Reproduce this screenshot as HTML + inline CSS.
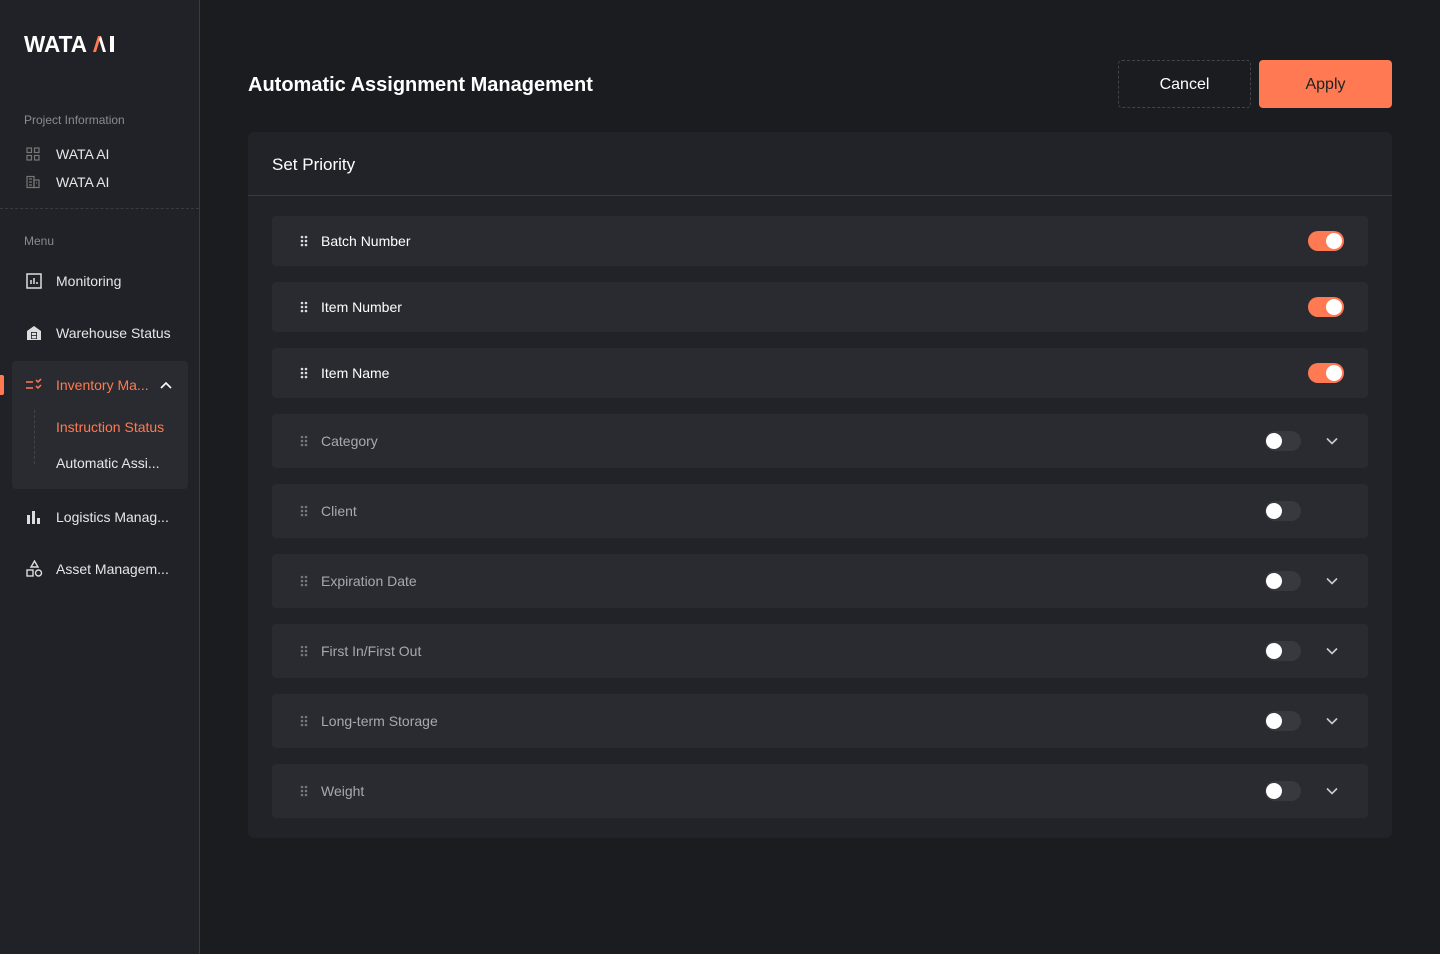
<!DOCTYPE html>
<html><head><meta charset="utf-8"><style>
*{box-sizing:border-box;margin:0;padding:0}
body{width:1440px;height:954px;background:#1b1c20;font-family:"Liberation Sans",sans-serif;position:relative;overflow:hidden;color:#fff}
.sb{position:absolute;left:0;top:0;width:200px;height:954px;background:#212227;border-right:1px solid #3a3b40}
.abs{position:absolute}
.logo{left:24px;top:32px;font-size:22px;font-weight:bold;letter-spacing:-1px;color:#fff;white-space:nowrap}
.lbl{font-size:12px;color:#8a8b90;left:24px}
.it{left:56px;font-size:14px;color:#e6e6e8}
.ic{left:26px}
.card{left:248px;top:132px;width:1144px;height:706px;background:#222328;border-radius:6px}
.row{position:absolute;left:272px;width:1096px;background:#2a2b30;border-radius:4px}
.row .t{position:absolute;left:49px;font-size:14px}
.row .d{position:absolute;left:28px}
.tg{position:absolute;width:36px;height:20px;border-radius:10px}
.on{left:1036px;background:#ff7a52}
.on:after{content:"";position:absolute;right:2px;top:2px;width:16px;height:16px;border-radius:50%;background:#fff}
.off{left:993px;background:#38393e}
.off:after{content:"";position:absolute;left:1px;top:2px;width:16px;height:16px;border-radius:50%;background:#fff}
.ch{position:absolute;left:1054px}
</style></head><body>
<div class="sb">
<svg class="abs" style="left:24px;top:35px" width="92" height="18" viewBox="0 0 92 18"><text x="0" y="17" font-family="Liberation Sans" font-weight="bold" font-size="23" fill="#fff" textLength="63" lengthAdjust="spacingAndGlyphs">WATA</text><path d="M69 17L74 1h3l-5 16z" fill="#ff7a52"/><path d="M77 1l5 16h-3l-4-13z" fill="#fff"/><rect x="86" y="1" width="4" height="16" fill="#fff"/></svg>
<div class="abs lbl" style="top:113px">Project Information</div>
<svg class="abs ic" style="top:147px" width="14" height="14" viewBox="0 0 14 14" fill="none" stroke="#777" stroke-width="1.2"><rect x="1" y="1" width="4.5" height="4.5"/><rect x="8.5" y="1" width="4.5" height="4.5"/><rect x="1" y="8.5" width="4.5" height="4.5"/><rect x="8.5" y="8.5" width="4.5" height="4.5"/></svg>
<div class="abs it" style="top:146px">WATA AI</div>
<svg class="abs ic" style="top:175px" width="14" height="14" viewBox="0 0 14 14" fill="none" stroke="#777" stroke-width="1.2"><rect x="1" y="1.5" width="7" height="11"/><rect x="8" y="5" width="5" height="7.5"/><path d="M3 4h3M3 7h3M3 10h3M10 8h1"/></svg>
<div class="abs it" style="top:174px">WATA AI</div>
<div class="abs" style="left:0;top:208px;width:199px;border-top:1px dashed #3a3b40"></div>
<div class="abs lbl" style="top:234px">Menu</div>
<svg class="abs ic" style="top:273px" width="16" height="16" viewBox="0 0 16 16" fill="none" stroke="#ddd" stroke-width="1.5"><rect x="1" y="1" width="14" height="14"/><path d="M5 11V7M8 11V5M11 11V9"/></svg>
<div class="abs it" style="top:273px">Monitoring</div>
<svg class="abs ic" style="top:325px" width="16" height="16" viewBox="0 0 16 16"><path d="M1 6L8 1l7 5v9H1z" fill="#ddd"/><rect x="5" y="7" width="6" height="7" fill="#212227"/><rect x="5.8" y="7.8" width="4.4" height="2.4" fill="#ddd"/><rect x="5.8" y="11" width="4.4" height="2.4" fill="#ddd"/></svg>
<div class="abs it" style="top:325px">Warehouse Status</div>
<div class="abs" style="left:0;top:375px;width:4px;height:20px;background:#ff7a52;border-radius:0 2px 2px 0"></div>
<div class="abs" style="left:12px;top:361px;width:176px;height:128px;background:#2a2b30;border-radius:4px"></div>
<svg class="abs ic" style="top:378px" width="18" height="14" viewBox="0 0 18 14" fill="none" stroke="#ff7a52" stroke-width="1.5"><path d="M0 4h7M0 10h7M10 2l2 2 3-3M10 8l2 2 3-3"/></svg>
<div class="abs it" style="top:377px;color:#ff7a52">Inventory Ma...</div>
<svg class="abs" style="left:159px;top:380px" width="14" height="10" viewBox="0 0 14 10" fill="none" stroke="#fff" stroke-width="1.6"><path d="M2 8l5-5 5 5"/></svg>
<div class="abs" style="left:34px;top:410px;height:54px;border-left:1px dashed #444"></div>
<div class="abs it" style="top:419px;color:#ff7a52">Instruction Status</div>
<div class="abs it" style="top:455px">Automatic Assi...</div>
<svg class="abs ic" style="top:509px" width="16" height="16" viewBox="0 0 16 16" fill="#ddd"><rect x="1" y="6" width="3" height="9"/><rect x="6" y="2" width="3" height="13"/><rect x="11" y="9" width="3" height="6"/></svg>
<div class="abs it" style="top:509px">Logistics Manag...</div>
<svg class="abs ic" style="top:560px" width="17" height="17" viewBox="0 0 17 17" fill="none" stroke="#ddd" stroke-width="1.4"><path d="M8.5 1l3.5 6H5z"/><rect x="1" y="10" width="6" height="6"/><circle cx="12.5" cy="13" r="3"/></svg>
<div class="abs it" style="top:561px">Asset Managem...</div>
</div>

<div class="abs" style="left:248px;top:74px;font-size:20px;font-weight:bold">Automatic Assignment Management</div>
<div class="abs" style="left:1118px;top:60px;width:133px;height:48px;border:1px dashed #444;border-radius:4px;font-size:16px;text-align:center;line-height:48px">Cancel</div>
<div class="abs" style="left:1259px;top:60px;width:133px;height:48px;background:#ff7a52;border-radius:4px;font-size:16px;text-align:center;line-height:50px;color:#222">Apply</div>

<div class="abs card">
<div style="position:absolute;left:24px;top:23px;font-size:17px">Set Priority</div>
<div style="position:absolute;left:0;top:63px;width:1144px;border-top:1px solid #3a3b40"></div>
</div>

<div class="row" style="top:216px;height:50px"><svg class="d" style="top:19px" width="8" height="12"><g fill="#ddd"><circle cx="2" cy="2" r="1.3"/><circle cx="6" cy="2" r="1.3"/><circle cx="2" cy="6" r="1.3"/><circle cx="6" cy="6" r="1.3"/><circle cx="2" cy="10" r="1.3"/><circle cx="6" cy="10" r="1.3"/></g></svg><div class="t" style="top:17px">Batch Number</div><div class="tg on" style="top:15px"></div></div>
<div class="row" style="top:282px;height:50px"><svg class="d" style="top:19px" width="8" height="12"><g fill="#ddd"><circle cx="2" cy="2" r="1.3"/><circle cx="6" cy="2" r="1.3"/><circle cx="2" cy="6" r="1.3"/><circle cx="6" cy="6" r="1.3"/><circle cx="2" cy="10" r="1.3"/><circle cx="6" cy="10" r="1.3"/></g></svg><div class="t" style="top:17px">Item Number</div><div class="tg on" style="top:15px"></div></div>
<div class="row" style="top:348px;height:50px"><svg class="d" style="top:19px" width="8" height="12"><g fill="#ddd"><circle cx="2" cy="2" r="1.3"/><circle cx="6" cy="2" r="1.3"/><circle cx="2" cy="6" r="1.3"/><circle cx="6" cy="6" r="1.3"/><circle cx="2" cy="10" r="1.3"/><circle cx="6" cy="10" r="1.3"/></g></svg><div class="t" style="top:17px">Item Name</div><div class="tg on" style="top:15px"></div></div>

<div class="row" style="top:414px;height:54px"><svg class="d" style="top:21px" width="8" height="12"><g fill="#777"><circle cx="2" cy="2" r="1.3"/><circle cx="6" cy="2" r="1.3"/><circle cx="2" cy="6" r="1.3"/><circle cx="6" cy="6" r="1.3"/><circle cx="2" cy="10" r="1.3"/><circle cx="6" cy="10" r="1.3"/></g></svg><div class="t" style="top:19px;color:#a8a9ad">Category</div><div class="tg off" style="top:17px"></div><svg class="ch" style="top:23px" width="12" height="8" fill="none" stroke="#ccc" stroke-width="1.6"><path d="M1 1.5l5 5 5-5"/></svg></div>
<div class="row" style="top:484px;height:54px"><svg class="d" style="top:21px" width="8" height="12"><g fill="#777"><circle cx="2" cy="2" r="1.3"/><circle cx="6" cy="2" r="1.3"/><circle cx="2" cy="6" r="1.3"/><circle cx="6" cy="6" r="1.3"/><circle cx="2" cy="10" r="1.3"/><circle cx="6" cy="10" r="1.3"/></g></svg><div class="t" style="top:19px;color:#a8a9ad">Client</div><div class="tg off" style="top:17px"></div></div>
<div class="row" style="top:554px;height:54px"><svg class="d" style="top:21px" width="8" height="12"><g fill="#777"><circle cx="2" cy="2" r="1.3"/><circle cx="6" cy="2" r="1.3"/><circle cx="2" cy="6" r="1.3"/><circle cx="6" cy="6" r="1.3"/><circle cx="2" cy="10" r="1.3"/><circle cx="6" cy="10" r="1.3"/></g></svg><div class="t" style="top:19px;color:#a8a9ad">Expiration Date</div><div class="tg off" style="top:17px"></div><svg class="ch" style="top:23px" width="12" height="8" fill="none" stroke="#ccc" stroke-width="1.6"><path d="M1 1.5l5 5 5-5"/></svg></div>
<div class="row" style="top:624px;height:54px"><svg class="d" style="top:21px" width="8" height="12"><g fill="#777"><circle cx="2" cy="2" r="1.3"/><circle cx="6" cy="2" r="1.3"/><circle cx="2" cy="6" r="1.3"/><circle cx="6" cy="6" r="1.3"/><circle cx="2" cy="10" r="1.3"/><circle cx="6" cy="10" r="1.3"/></g></svg><div class="t" style="top:19px;color:#a8a9ad">First In/First Out</div><div class="tg off" style="top:17px"></div><svg class="ch" style="top:23px" width="12" height="8" fill="none" stroke="#ccc" stroke-width="1.6"><path d="M1 1.5l5 5 5-5"/></svg></div>
<div class="row" style="top:694px;height:54px"><svg class="d" style="top:21px" width="8" height="12"><g fill="#777"><circle cx="2" cy="2" r="1.3"/><circle cx="6" cy="2" r="1.3"/><circle cx="2" cy="6" r="1.3"/><circle cx="6" cy="6" r="1.3"/><circle cx="2" cy="10" r="1.3"/><circle cx="6" cy="10" r="1.3"/></g></svg><div class="t" style="top:19px;color:#a8a9ad">Long-term Storage</div><div class="tg off" style="top:17px"></div><svg class="ch" style="top:23px" width="12" height="8" fill="none" stroke="#ccc" stroke-width="1.6"><path d="M1 1.5l5 5 5-5"/></svg></div>
<div class="row" style="top:764px;height:54px"><svg class="d" style="top:21px" width="8" height="12"><g fill="#777"><circle cx="2" cy="2" r="1.3"/><circle cx="6" cy="2" r="1.3"/><circle cx="2" cy="6" r="1.3"/><circle cx="6" cy="6" r="1.3"/><circle cx="2" cy="10" r="1.3"/><circle cx="6" cy="10" r="1.3"/></g></svg><div class="t" style="top:19px;color:#a8a9ad">Weight</div><div class="tg off" style="top:17px"></div><svg class="ch" style="top:23px" width="12" height="8" fill="none" stroke="#ccc" stroke-width="1.6"><path d="M1 1.5l5 5 5-5"/></svg></div>
</body></html>
